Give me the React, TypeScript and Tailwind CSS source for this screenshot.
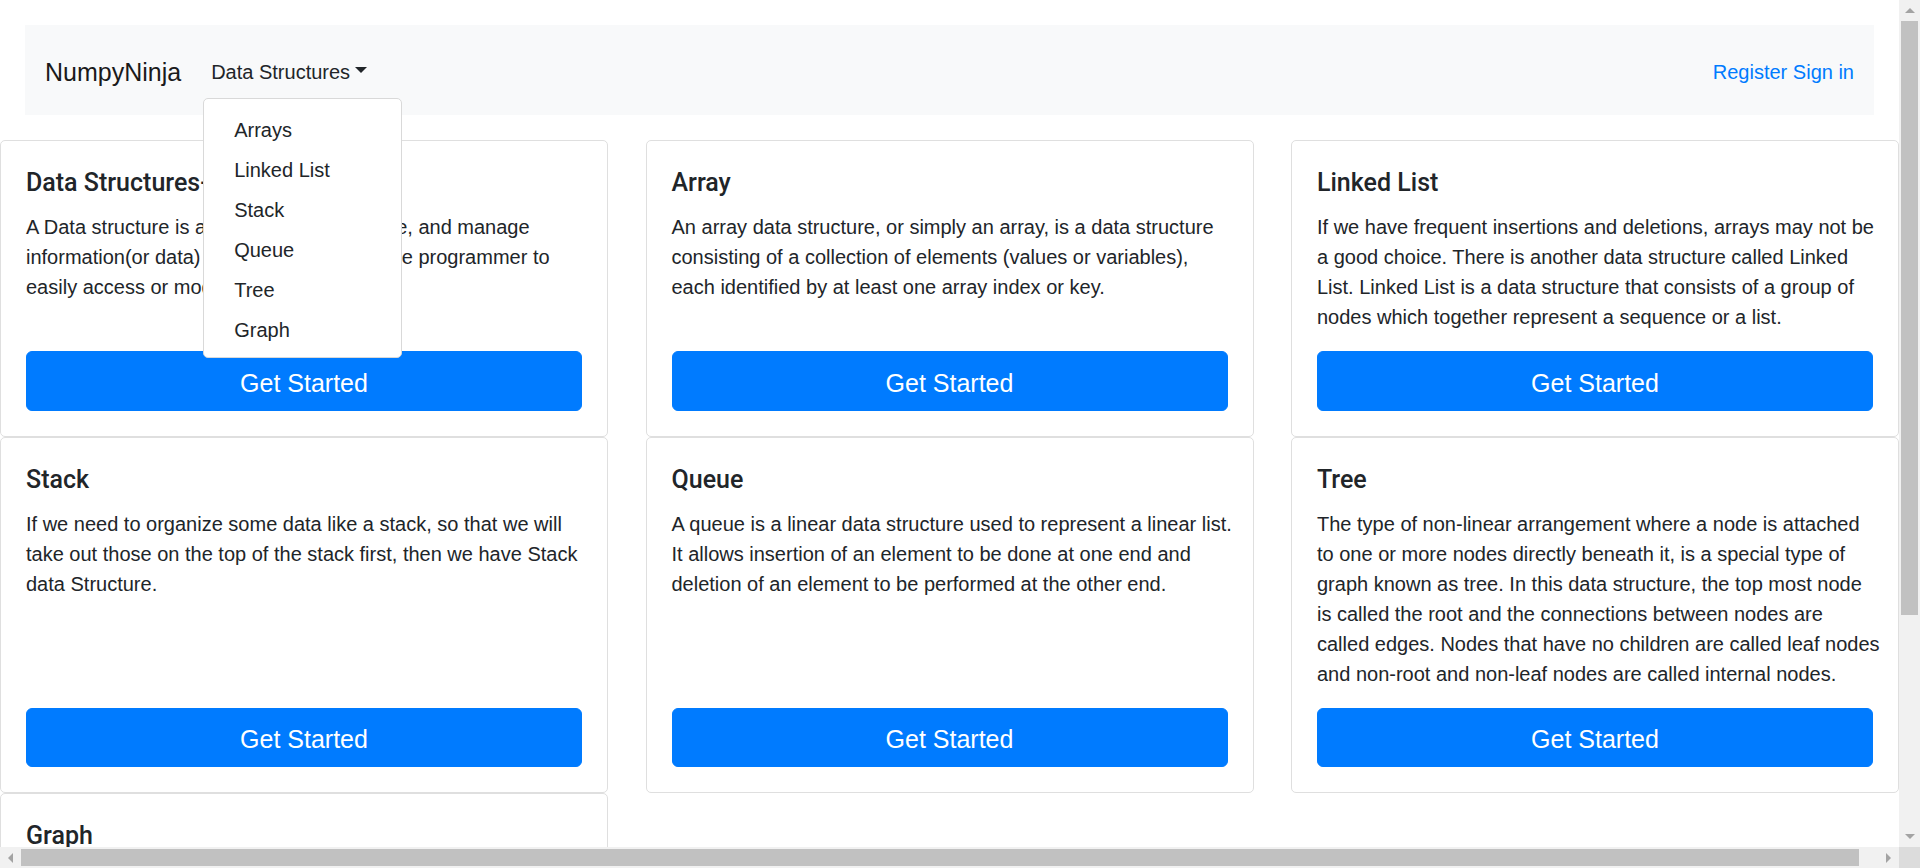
import React from 'react'

type Topic = {
    title: string
    lines: string[]
}

const topics: Topic[] = [
    {
        title: 'Data Structures-Introduction',
        lines: [
            'A Data structure is a way to organize, store, and manage',
            'information(or data) in a way that allows the programmer to',
            'easily access or modify the data.',
        ],
    },
    {
        title: 'Array',
        lines: [
            'An array data structure, or simply an array, is a data structure',
            'consisting of a collection of elements (values or variables),',
            'each identified by at least one array index or key.',
        ],
    },
    {
        title: 'Linked List',
        lines: [
            'If we have frequent insertions and deletions, arrays may not be',
            'a good choice. There is another data structure called Linked',
            'List. Linked List is a data structure that consists of a group of',
            'nodes which together represent a sequence or a list.',
        ],
    },
    {
        title: 'Stack',
        lines: [
            'If we need to organize some data like a stack, so that we will',
            'take out those on the top of the stack first, then we have Stack',
            'data Structure.',
        ],
    },
    {
        title: 'Queue',
        lines: [
            'A queue is a linear data structure used to represent a linear list.',
            'It allows insertion of an element to be done at one end and',
            'deletion of an element to be performed at the other end.',
        ],
    },
    {
        title: 'Tree',
        lines: [
            'The type of non-linear arrangement where a node is attached',
            'to one or more nodes directly beneath it, is a special type of',
            'graph known as tree. In this data structure, the top most node',
            'is called the root and the connections between nodes are',
            'called edges. Nodes that have no children are called leaf nodes',
            'and non-root and non-leaf nodes are called internal nodes.',
        ],
    },
    {
        // the rest of this card is below the fold
        title: 'Graph',
        lines: [],
    },
]

const menuItems = ['Arrays', 'Linked List', 'Stack', 'Queue', 'Tree', 'Graph']

function TopicCard({ topic }: { topic: Topic }) {
    return (
        <div className="flex flex-col rounded-[5px] border border-[#dfdfdf] bg-white p-[25px]">
            <h5 className="mb-[15px] pt-[4px] font-['Roboto',sans-serif] text-[25px] font-medium leading-[26px] text-[#212529]">
                {topic.title}
            </h5>
            {topic.lines.length > 0 && (
                <p className="mb-[20px] whitespace-nowrap text-[20px]">
                    {topic.lines.map((line, i) => (
                        <span key={i} className="block pt-[3px] leading-[27px]">{line}</span>
                    ))}
                </p>
            )}
            <button className="mt-auto h-[59.5px] w-full rounded-[6px] border border-[#007bff] bg-[#007bff] pt-[5px] text-[25px] leading-[37.5px] text-white">
                Get Started
            </button>
        </div>
    )
}

function Navbar() {
    return (
        <nav className="ml-[25px] mt-[25px] flex h-[90px] w-[1849px] items-center bg-[#f8f9fa] px-[20px]">
            <a className="mr-[20px] pt-[5px] text-[25px] leading-[37.5px] text-[#1a1a1a]">NumpyNinja</a>
            <div className="relative">
                <button className="flex items-center px-[10px] py-[10px] text-[20px] leading-[30px] text-[#212529]">
                    <span className="pt-[4px] leading-[26px]">Data Structures</span>
                    <span className="ml-[5px] h-0 w-0 border-x-[6px] border-t-[6px] border-x-transparent border-t-[#212529]"></span>
                </button>
                <div className="absolute left-[2px] top-full z-10 mt-[3px] w-[199px] rounded-[5px] border border-[#d9d9d9] bg-white py-[9px]">
                    {menuItems.map((item) => (
                        <a key={item} className="block h-[40px] px-[30px] pb-[3px] pt-[7px] text-[20px] leading-[30px] text-[#212529]">
                            {item}
                        </a>
                    ))}
                </div>
            </div>
            <div className="ml-auto pt-[3px] text-[20px] leading-[30px] text-[#007bff]">
                <a>Register</a> <a>Sign in</a>
            </div>
        </nav>
    )
}

// browser scrollbars from the screenshot (125% scale, 21px thick)
function VScrollbar() {
    return (
        <div className="flex h-full w-[21px] flex-col bg-[#f1f1f1]">
            <div className="flex h-[21px] items-center justify-center">
                <span className="h-0 w-0 border-x-[5px] border-b-[5px] border-x-transparent border-b-[#a3a3a3]"></span>
            </div>
            <div className="mx-[2px] h-[594px] bg-[#c1c1c1]"></div>
            <div className="flex-1"></div>
            <div className="flex h-[21px] items-center justify-center">
                <span className="h-0 w-0 border-x-[5px] border-t-[5px] border-x-transparent border-t-[#a3a3a3]"></span>
            </div>
        </div>
    )
}

function HScrollbar() {
    return (
        <div className="flex h-full w-[1899px] bg-[#f1f1f1]">
            <div className="flex w-[21px] items-center justify-center">
                <span className="h-0 w-0 border-y-[5px] border-r-[5px] border-y-transparent border-r-[#a3a3a3]"></span>
            </div>
            <div className="my-[2px] w-[1838px] bg-[#c1c1c1]"></div>
            <div className="flex-1"></div>
            <div className="flex w-[21px] items-center justify-center">
                <span className="h-0 w-0 border-y-[5px] border-l-[5px] border-y-transparent border-l-[#a3a3a3]"></span>
            </div>
        </div>
    )
}

export default function App() {
    return (
        <div className="flex h-[868px] w-[1920px] flex-col overflow-hidden bg-white font-['Liberation_Sans',Arial,sans-serif] text-[#212529]">
            <div className="flex h-[847px]">
                <div className="w-[1899px] overflow-hidden">
                    <Navbar />
                    <div className="mt-[25px] grid w-[1899px] grid-cols-3 gap-x-[37.5px]">
                        {topics.map((topic) => (
                            <TopicCard key={topic.title} topic={topic} />
                        ))}
                    </div>
                </div>
                <VScrollbar />
            </div>
            <div className="flex h-[21px]">
                <HScrollbar />
                <div className="w-[21px] bg-[#dcdcdc]"></div>
            </div>
        </div>
    )
}
